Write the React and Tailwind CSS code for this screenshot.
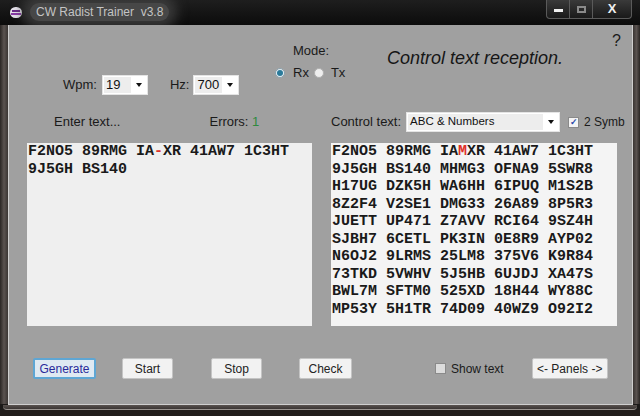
import React from "react";

const leftText = [
  [["F2NO5 89RMG IA"], ["-", true], ["XR 41AW7 1C3HT"]],
  [["9J5GH BS140"]],
];

const rightText = [
  [["F2NO5 89RMG IA"], ["M", true], ["XR 41AW7 1C3HT"]],
  [["9J5GH BS140 MHMG3 OFNA9 5SWR8"]],
  [["H17UG DZK5H WA6HH 6IPUQ M1S2B"]],
  [["8Z2F4 V2SE1 DMG33 26A89 8P5R3"]],
  [["JUETT UP471 Z7AVV RCI64 9SZ4H"]],
  [["SJBH7 6CETL PK3IN 0E8R9 AYP02"]],
  [["N6OJ2 9LRMS 25LM8 375V6 K9R84"]],
  [["73TKD 5VWHV 5J5HB 6UJDJ XA47S"]],
  [["BWL7M SFTM0 525XD 18H44 WY88C"]],
  [["MP53Y 5H1TR 74D09 40WZ9 O92I2"]],
];

function Lines({ lines }) {
  return lines.map((line, i) => (
    <div key={i} className="whitespace-pre">
      {line.map(([t, red], j) => (
        <span key={j} className={red ? "text-[#e0302a]" : ""}>{t}</span>
      ))}
    </div>
  ));
}

function Combo({ value, width, text = "text-[13px]" }) {
  return (
    <div className={`flex items-center h-[20px] bg-white border border-[#e4e4e4] ${width}`}>
      <span className={`ml-[1px] h-[16px] flex items-center px-[2px] bg-[#ededed] flex-1 ${text} text-[#111]`}>{value}</span>
      <span className="w-[16px] flex justify-center">
        <span className="w-0 h-0 border-l-[3px] border-r-[3px] border-t-[4px] border-l-transparent border-r-transparent border-t-[#111]" />
      </span>
    </div>
  );
}

function Btn({ children, w, ml, primary }) {
  return (
    <button
      className={`h-[21px] ${w} ${ml} text-[12px] flex items-center justify-center rounded-[2px] ${
        primary
          ? "bg-[#dfe9f2] border-2 border-[#5ea6d4] text-[#2a2a9a]"
          : "bg-[#f2f2f2] border border-[#c4c4c4] text-[#222]"
      }`}
    >
      {children}
    </button>
  );
}

export default function App() {
  return (
    <div className="w-[640px] h-[416px] bg-[#1c1a19] flex flex-col overflow-hidden font-['Liberation_Sans',Arial,sans-serif]">
      {/* title bar */}
      <div className="h-[25px] flex items-start bg-gradient-to-b from-[#1e1e1e] to-[#0c0c0c]">
        <div className="ml-[10px] mt-[7px] w-[12px] h-[11px] rounded-full bg-[#e8e4ee] flex flex-col justify-center overflow-hidden">
          <div className="h-[2px] bg-[#6a2a8a] mx-[2px]" />
          <div className="h-[2px] bg-[#8a3aa8] mt-[1px] mx-[1px]" />
        </div>
        <div className="ml-[8px] mt-[3px] px-[6px] h-[18px] flex items-center rounded-full bg-[#474747] shadow-[0_0_12px_8px_rgba(70,70,70,0.75)] text-[12px] text-[#c4c4c4] whitespace-pre">
          CW Radist Trainer  v3.8
        </div>
        <div className="ml-auto mr-[8px] flex h-[19px] border border-[#5a5a5a] border-t-0 rounded-b-[4px] overflow-hidden bg-gradient-to-b from-[#3a3a3a] to-[#1a1a1a]">
          <div className="w-[23px] flex items-center justify-center border-r border-[#5a5a5a]">
            <div className="w-[9px] h-[3px] bg-[#f0f0f0] mt-[3px]" />
          </div>
          <div className="w-[23px] flex items-center justify-center border-r border-[#5a5a5a]">
            <div className="w-[9px] h-[7px] border-2 border-[#8a8a8a]" />
          </div>
          <div className="w-[38px] flex items-center justify-center text-[13px] font-bold text-[#f0f0f0]">X</div>
        </div>
      </div>

      <div className="flex h-[379px]">
        <div className="w-[9px] bg-gradient-to-r from-[#2a2624] via-[#5a5350] to-[#3a3533] border-r border-[#cfcfcf]" />

        {/* client area */}
        <div className="w-[623px] bg-[#a0a0a0] flex flex-col text-[13px] text-[#1a1a1a]">
          {/* top row */}
          <div className="flex h-[75px]">
            <div className="w-[266px] pl-[54px] pt-[50px]">
              <div className="flex items-center h-[20px]">
                <span>Wpm:</span>
                <div className="ml-[5px]"><Combo value="19" width="w-[46px]" /></div>
                <span className="ml-[22px]">Hz:</span>
                <div className="ml-[4px]"><Combo value="700" width="w-[46px]" /></div>
              </div>
            </div>
            <div className="w-[112px] pt-[18px]">
              <div className="pl-[18px] leading-[16px]">Mode:</div>
              <div className="mt-[6px] h-[16px] flex items-center">
                <span className="w-[10px] h-[10px] rounded-full bg-[#e6eef2] border border-[#8aa0ac] flex items-center justify-center">
                  <span className="w-[6px] h-[6px] rounded-full bg-[#2a7a9a]" />
                </span>
                <span className="ml-[8px]">Rx</span>
                <span className="ml-[5px] w-[10px] h-[10px] rounded-full bg-[#eeeeee] border border-[#b0b0b0]" />
                <span className="ml-[7px]">Tx</span>
              </div>
            </div>
            <div className="pt-[23px] text-[18px] italic leading-[21px] text-[#161616]">Control text reception.</div>
            <div className="ml-auto mr-[11px] pt-[7px] text-[16px] leading-[18px]">?</div>
          </div>

          {/* labels row */}
          <div className="mt-[12px] h-[20px] flex items-center pl-[18px]">
            <div className="w-[304px] flex items-center">
              <span className="ml-[27px]">Enter text...</span>
              <span className="ml-[89px]">
                Errors: <span className="text-[#2e8a3e]">1</span>
              </span>
            </div>
            <span>Control text:</span>
            <div className="ml-[5px]"><Combo value="ABC & Numbers" width="w-[154px]" text="text-[11.5px]" /></div>
            <span className="ml-[8px] w-[11px] h-[11px] bg-[#f4f4f4] border border-[#8a8a8a] flex items-center justify-center text-[9px] leading-none text-[#2a4aa8] font-bold">✓</span>
            <span className="ml-[5px] text-[12px]">2 Symb</span>
          </div>

          {/* text boxes */}
          <div className="mt-[11px] pl-[18px] flex gap-[19px] font-['Liberation_Mono','Courier_New',monospace] font-bold text-[15px] leading-[17.5px] text-[#1a1a1a]">
            <div className="w-[285px] h-[183px] bg-[#efefef] px-[1px]">
              <Lines lines={leftText} />
            </div>
            <div className="w-[286px] h-[183px] bg-[#f4f4f4] px-[1px]">
              <Lines lines={rightText} />
            </div>
          </div>

          {/* buttons */}
          <div className="mt-[32px] flex items-center">
            <Btn w="w-[63px]" ml="ml-[24px]" primary>Generate</Btn>
            <Btn w="w-[51px]" ml="ml-[26px]">Start</Btn>
            <Btn w="w-[51px]" ml="ml-[38px]">Stop</Btn>
            <Btn w="w-[53px]" ml="ml-[37px]">Check</Btn>
            <span className="ml-[83px] w-[11px] h-[11px] bg-[#dcdcdc] border border-[#8a8a8a]" />
            <span className="ml-[5px] text-[12px]">Show text</span>
            <Btn w="w-[76px]" ml="ml-[28px]">&lt;- Panels -&gt;</Btn>
          </div>
        </div>

        <div className="flex-1 bg-gradient-to-r from-[#3a3533] via-[#5a5350] to-[#2a2624] border-l border-[#cfcfcf]" />
      </div>

      <div className="h-[12px] flex flex-col">
        <div className="h-[1px] ml-[8px] mr-[7px] bg-[#cfcfcf]" />
        <div className="h-[5px] bg-gradient-to-b from-[#5a5350] to-[#3a3533] mx-[3px] rounded-b-[4px] border-b border-[#9a9490]" />
        <div className="flex-1 bg-[#221e1c]" />
      </div>
    </div>
  );
}
